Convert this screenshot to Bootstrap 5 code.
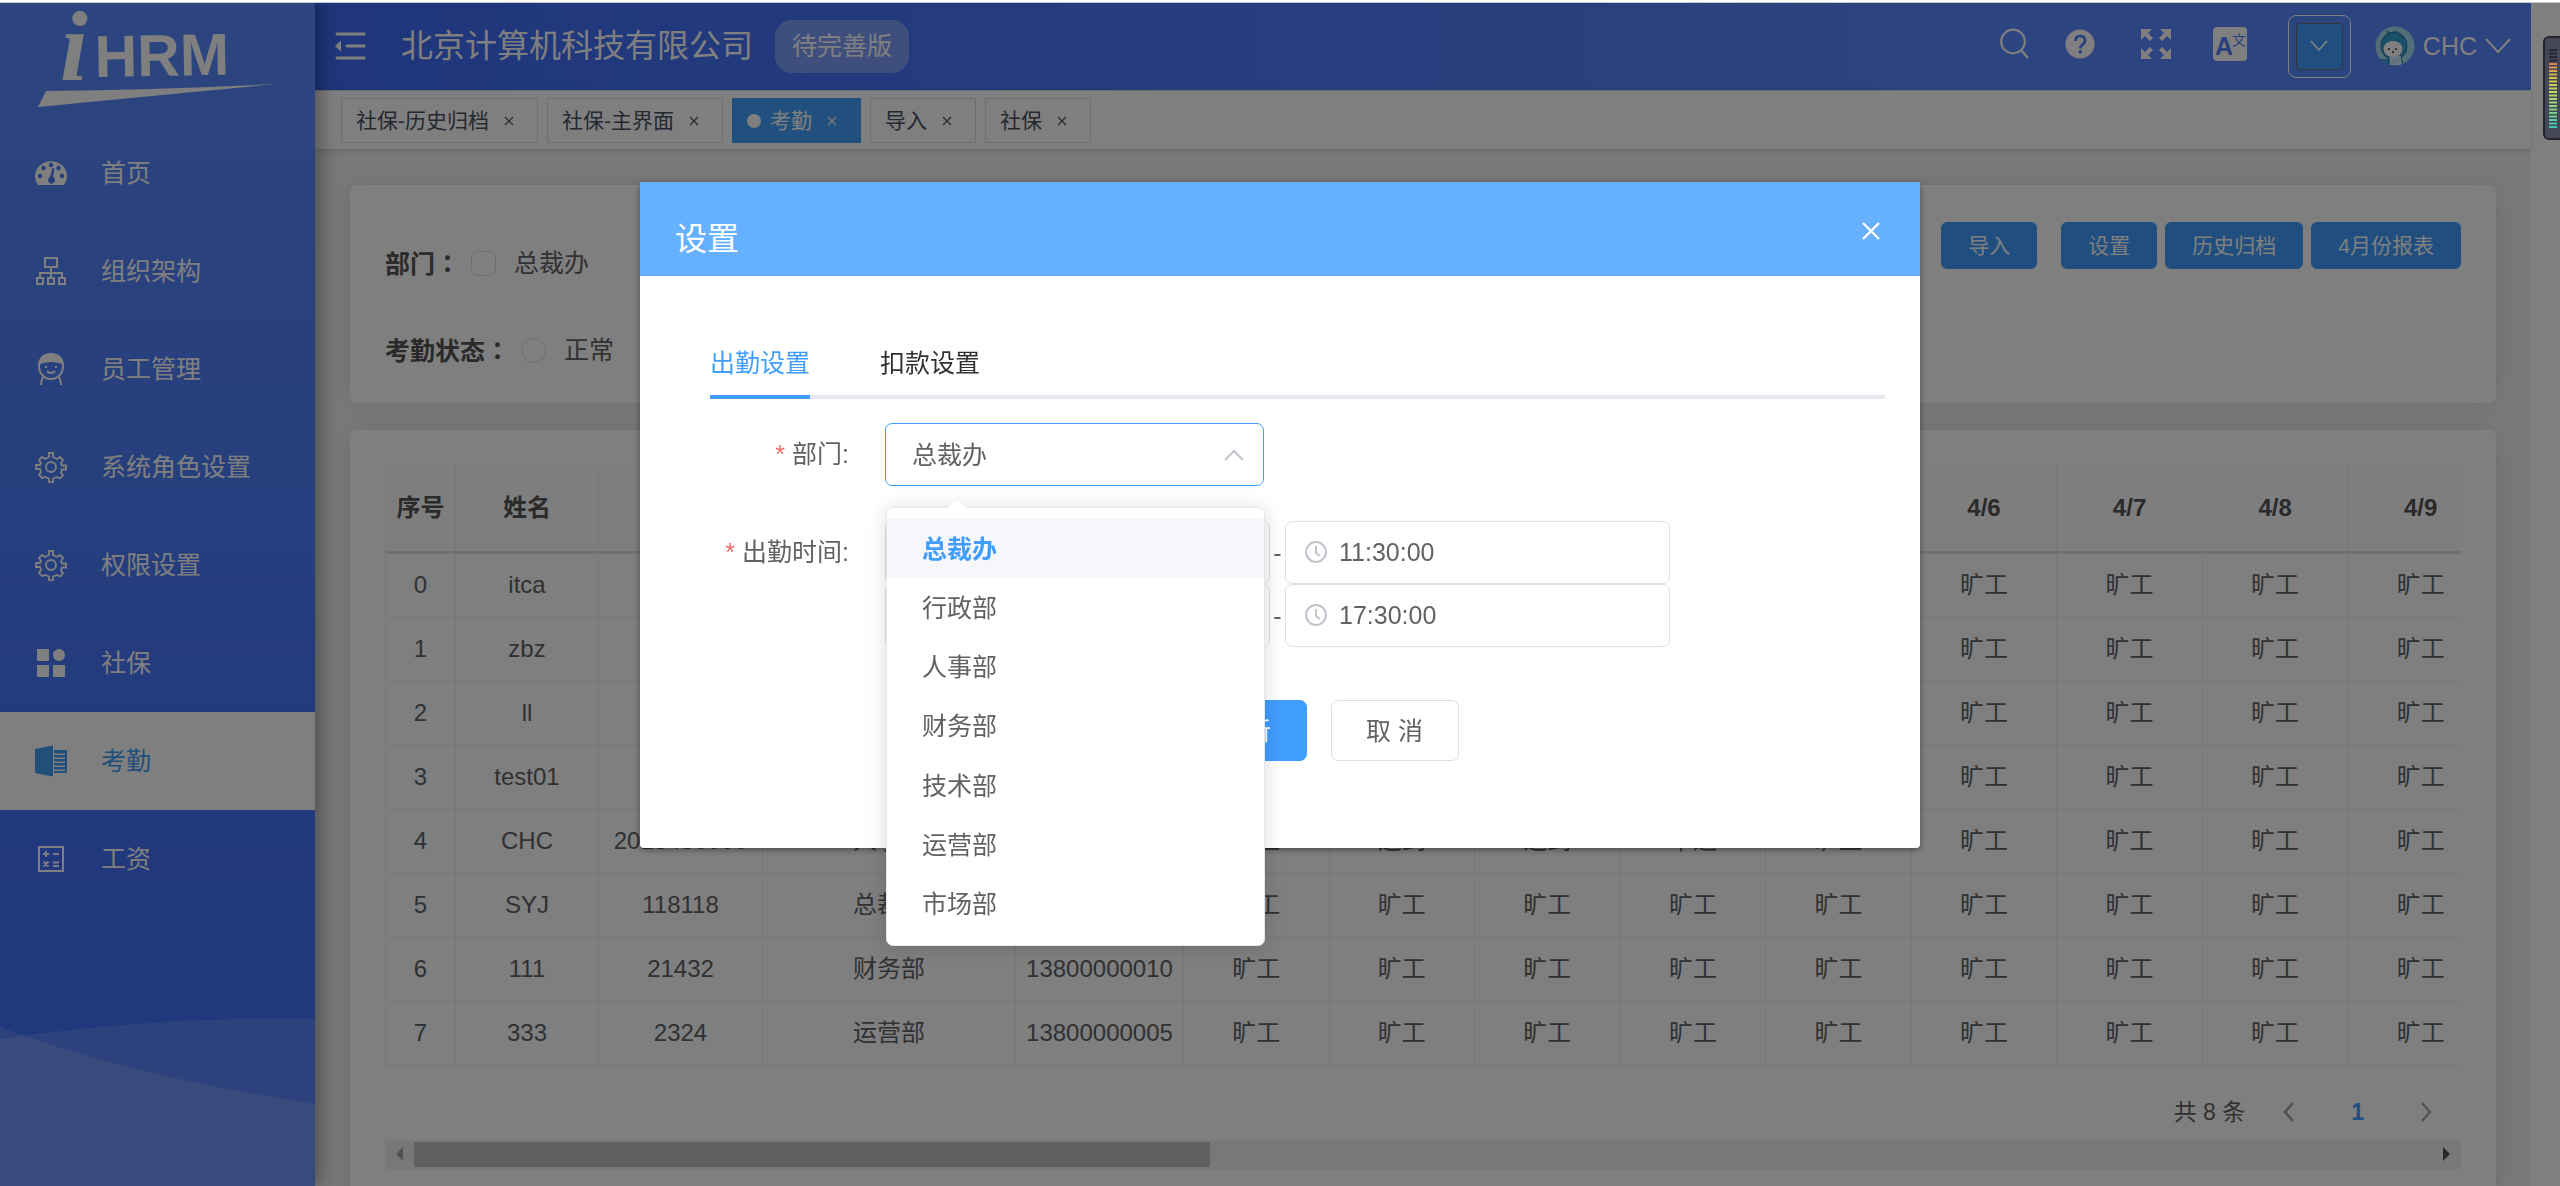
<!DOCTYPE html>
<html lang="zh-CN">
<head>
<meta charset="utf-8">
<meta name="viewport" content="width=device-width, initial-scale=1">
<title>iHRM 考勤</title>
<link href="https://cdn.jsdelivr.net/npm/bootstrap@5.3.0/dist/css/bootstrap.min.css" rel="stylesheet">
<style>
:root{--brand:#409eff;--ink:#606266;--line:#dcdfe6}
body{font-family:"Liberation Sans","Noto Sans CJK SC",sans-serif;font-size:25px;line-height:36px;color:var(--ink);height:100vh;overflow:hidden;background:#fff}
svg{display:block;flex:none}
.top-strip{height:3px;background:#fff;border-bottom:1px solid #c8c8c8;position:relative;z-index:1070}
.side-nav{width:315px;flex:none;background:linear-gradient(#5a8cfe,#4070f8 80%);box-shadow:4px 0 20px rgba(0,0,0,.4);position:relative;z-index:3}
.side-logo{height:121px}
.side-link{height:98px;padding:0 35px;gap:34px;color:#fff;text-decoration:none}
.side-link.active{background:#fff;color:#409ef5}
.side-wave{position:absolute;left:0;bottom:0;width:100%;height:172px}
.work-area{background:#eff3f7;min-width:0}
.scroll-gutter{width:29px;flex:none;background:#fff}
.top-bar{height:87px;flex:none;padding:0 20px;background:linear-gradient(90deg,#3e6cf8,#5888fe 75%);color:#fff}
.bare-btn{border:0;background:none;padding:0;color:inherit}
.head-tools{gap:36px}
.company{font-size:32px;line-height:48px;margin-left:35px}
.edition{height:53px;line-height:53px;padding:0 17px;border-radius:17px;background:rgba(255,255,255,.3);margin-left:22px}
.lang-box{width:63px;height:63px;border:1px solid #fff;border-radius:8px;margin:0 24px 0 41px}
.lang-btn{width:47px;height:47px;background:#409eff;border:1px solid #666a70;border-radius:4px;color:#fff}
.tag-bar{height:59px;flex:none;gap:9px;padding:7px 26px 0;background:#fff;border-top:1px solid #d8dce5;box-shadow:0 2px 6px rgba(0,0,0,.15);position:relative;z-index:1}
.tag-item{height:45px;border:1px solid #d8dce5;padding:2px 14px 0;font-size:21px;color:#495060;text-decoration:none;gap:6px}
.tag-item.active{background:#42a0ff;border-color:#42a0ff;color:#fff}
.tag-dot{width:14px;height:14px;border-radius:50%;background:#fff;margin-right:3px}
.tag-x{width:28px}
.content-pad{padding:36px 35px 0;gap:27px}
.panel{background:#fff;border-radius:7px;box-shadow:0 0 26px rgba(0,0,0,.1);padding:35px}
.filter-panel{height:218px;flex:none}
.filter-row{height:87px}
.filter-row b{font-weight:700;color:#555}
.filter-row b span{font-family:"Noto Sans CJK TC",sans-serif}
.filter-row .form-check-input{width:25px;height:25px;margin:0 18px 0 11px;border-color:#dcdfe6;flex:none}
.tool-set{padding-top:2px}
.btn-tool{height:47px;line-height:31px;padding:7px 26px;font-size:21px;color:#fff;background:var(--brand);border:1px solid var(--brand);border-radius:6px}
.att-wrap{overflow:hidden}
.att{table-layout:fixed;width:2109px;margin:0;font-size:24px;border-collapse:separate;border-spacing:0;border-left:1px solid #ebeef5;border-top:1px solid #ebeef5;text-align:center;color:var(--ink)}
.att td,.att th{border-right:1px solid #ebeef5;border-bottom:1px solid #ebeef5;padding:0;height:64px;white-space:nowrap}
.att th{height:88px;border-bottom:3px solid #e0e0e2;background:#fdfdfd;color:#555}
.pager{height:74px;padding:28px 29px 0 0;font-size:23px;gap:56px}
.pager .total{margin-right:-18px}
.pager a{color:#909299;text-decoration:none}
.hscroll{height:29px;background:#f1f1f1;color:#505050;padding:0 11px}
.hscroll i{height:25px;width:796px;background:#c1c1c1;margin-left:11px}
.modal-dialog{max-width:none;width:50%;margin:182px auto 0}
.modal-content{border:0;border-radius:4px;box-shadow:0 2px 6px rgba(0,0,0,.4);color:var(--ink)}
.modal-header{height:94px;padding:20px 40px 0 35px;background:#66b1ff;border:0;border-radius:0;color:#fff}
.modal-title{font-size:32px;line-height:48px;font-weight:400}
.modal-body{padding:68px 35px 87px 70px}
.set-tabs{height:55px;border-bottom:4px solid #e4e7ed;gap:70px;margin-bottom:24px}
.set-tabs a{height:55px;line-height:38px;color:#303133;text-decoration:none}
.set-tabs a.active{color:var(--brand);border-bottom:4px solid var(--brand)}
.form-line{gap:36px}
.form-line>label,.form-line>.lbl{width:139px;text-align:right;line-height:63px}
.lbl::before,.need::before{content:"* ";color:#f56c6c}
.ctl{height:63px;border:1px solid var(--line);border-radius:7px;font-size:25px;color:var(--ink);background:#fff}
.dept{width:379px;border-color:var(--brand);appearance:none;padding:0 26px}
.time-box{width:385px}
.time-box .ctl{width:100%;padding:0 53px}
.time-box svg{position:absolute;left:20px;top:20px}
.chev{position:absolute;right:20px;top:26px}
.dash{width:15px;text-align:center}
.btn-act{width:128px;height:61px;font-size:25px;border-radius:7px;border:1px solid var(--line);background:#fff;color:var(--ink)}
.btn-act.main{background:var(--brand);border-color:var(--brand);color:#fff}
.pop{position:absolute;left:1px;top:84px;width:379px;height:439px;background:#fff;border:1px solid #e4e7ed;border-radius:7px;box-shadow:0 2px 20px rgba(0,0,0,.15);padding:11px 0;margin:0;list-style:none;z-index:5}
.pop li{padding-left:35px}
.pop li.active{background:#f5f7fa;color:var(--brand);font-weight:700}
.pop-tip{position:absolute;left:62px;top:74px;z-index:6}
.meter{position:fixed;right:0;top:36px;z-index:1080}
</style>
<script src="https://cdn.jsdelivr.net/npm/bootstrap@5.3.0/dist/js/bootstrap.bundle.min.js"></script>
</head>
<body class="d-flex flex-column">
<div class="top-strip"></div>
<div class="d-flex flex-fill" style="min-height:0">
  <nav class="side-nav">
    <div class="side-logo">
      <svg width="315" height="121" viewBox="0 3 315 121" fill="#fff" role="img" aria-label="iHRM">
        <text x="60" y="80" font-family="Liberation Serif" font-weight="700" font-style="italic" font-size="100">i</text>
        <text x="95" y="77" font-family="Liberation Sans" font-weight="700" font-size="59" transform="rotate(-1 95 77)">HRM</text>
        <path d="M38 107 46 91Q160 90 276 84Q160 95 38 107z"/>
      </svg>
    </div>
    <a href="#" class="side-link d-flex align-items-center"><svg width="32" height="32" viewBox="0 0 32 32"><path fill="#fff" d="M3 28A16 15 0 1 1 29 28z"/><g fill="#4a7bfb"><circle cx="16" cy="8" r="2.2"/><circle cx="8.5" cy="11" r="2.2"/><circle cx="23.5" cy="11" r="2.2"/><circle cx="5" cy="19" r="2.2"/><circle cx="27" cy="19" r="2.2"/><path d="M17.500 11 19.500 11.500 18 20A3.500 3.500 0 1 1 15 20z"/></g></svg>首页</a>
    <a href="#" class="side-link d-flex align-items-center"><svg width="32" height="32" viewBox="0 0 32 32" fill="none" stroke="#fff" stroke-width="2"><path d="M10 3h12v9H10zM2 23h6v6H2zM13 23h6v6h-6zM24 23h6v6h-6zM16 12v11M5 23v-5h22v5"/></svg>组织架构</a>
    <a href="#" class="side-link d-flex align-items-center"><svg width="32" height="32" viewBox="0 0 32 32" fill="none" stroke="#fff" stroke-width="2"><path d="M16 1C8 1 4 6 4 13s5 13 12 13 12-6 12-13S24 1 16 1zM8 24q-2 3-2 8M24 24q2 3 2 8M12 18q4 4 8 0"/><path fill="#fff" d="M5 10Q7 2 16 2T27 10Q20 8 16 8T5 10z"/><path d="M11 13v2M21 13v2"/></svg>员工管理</a>
    <a href="#" class="side-link d-flex align-items-center"><svg width="32" height="32" viewBox="0 0 32 32" fill="none" stroke="#fff" stroke-width="1.800"><use href="#gear"/></svg>系统角色设置</a>
    <a href="#" class="side-link d-flex align-items-center"><svg width="32" height="32" viewBox="0 0 32 32" fill="none" stroke="#fff" stroke-width="1.800"><g id="gear"><path d="M14 2h4v4l4 2 3-2 3 3-2 3.500 1 2h4v4h-4l-1 3 2 3-3 3-3-1.500-4 1.500v4h-4v-4l-4-1.500L7 27l-3-3 2-3-1-3H1v-4h4l1-2L4 9l3-3 3 2 4-2z"/><circle cx="16" cy="16" r="5"/></g></svg>权限设置</a>
    <a href="#" class="side-link d-flex align-items-center"><svg width="32" height="32" viewBox="0 0 32 32" fill="#fff"><path d="M2 2h12v12H2zM2 18h12v12H2zM18 18h12v12H18z"/><circle cx="24" cy="8" r="6"/></svg>社保</a>
    <a href="#" class="side-link active d-flex align-items-center"><svg width="32" height="32" viewBox="0 0 32 32" fill="#409ef5"><path d="M0 4 18 .5v31L0 28zM19 5h13v23H19v-2h11v-1.500H19V22h11v-1.500H19V18h11v-1.500H19V14h11v-1.500H19V10h11V8.500H19z"/></svg>考勤</a>
    <a href="#" class="side-link d-flex align-items-center"><svg width="32" height="32" viewBox="0 0 32 32" fill="none" stroke="#fff" stroke-width="2"><path d="M4 4h24v24H4z"/><path d="M8 11h6M11 8v6M18 11h6M8.500 18.500l5 5M13.500 18.500l-5 5M18 19.500h6M18 23h6"/></svg>工资</a>
    <svg class="side-wave" viewBox="0 0 315 172" preserveAspectRatio="none" fill="#fff" fill-opacity=".14"><path d="M0 13Q130 62 315 90V172H0z"/><path d="M0 25Q160 2 315 5V172H0z"/></svg>
  </nav>
  <div class="work-area flex-fill d-flex flex-column">
    <header class="top-bar d-flex align-items-center">
      <button class="bare-btn" aria-label="收起菜单"><svg width="31" height="28" viewBox="0 0 31 28" stroke="#fff" stroke-width="3" stroke-linecap="round"><path d="M2 2h27M12 14h17M2 26h27"/><path d="M0 14 6 8.500v11z" fill="#fff" stroke="none"/></svg></button>
      <span class="company">北京计算机科技有限公司</span>
      <span class="edition">待完善版</span>
      <div class="ms-auto d-flex align-items-center">
        <div class="head-tools d-flex align-items-center pb-1">
          <button class="bare-btn" aria-label="搜索"><svg width="30" height="32" viewBox="0 0 30 32" fill="none" stroke="#fff" stroke-width="2.200"><circle cx="14" cy="13.500" r="11.800"/><path d="m22 22 7 8"/></svg></button>
          <button class="bare-btn" aria-label="帮助"><svg width="30" height="32" viewBox="2 0 30 32"><circle cx="17" cy="16" r="14.500" fill="#fff"/><path d="M12.500 13q0-5 4.700-5t4.800 4.500q0 2.500-2.700 4.300-2 1.300-2 3.700" fill="none" stroke="#4a7afa" stroke-width="2.600"/><circle cx="17.200" cy="24" r="1.700" fill="#4a7afa"/></svg></button>
          <button class="bare-btn ms-2" aria-label="全屏"><svg width="34" height="34" viewBox="0 0 34 34" fill="#fff"><g id="arr"><path d="M2 2h11l-4 4 5 5-3 3-5-5-4 4z"/></g><use href="#arr" transform="matrix(-1 0 0 1 34 0)"/><use href="#arr" transform="matrix(1 0 0 -1 0 34)"/><use href="#arr" transform="matrix(-1 0 0 -1 34 34)"/></svg></button>
          <button class="bare-btn ms-1" aria-label="语言"><svg width="34" height="34" viewBox="0 0 34 34"><rect width="34" height="34" rx="4" fill="#fff"/><text x="2" y="28" font-family="Liberation Sans" font-weight="700" font-size="25" fill="#5080fb">A</text><text x="19" y="18" font-family="Noto Sans CJK SC" font-size="14" fill="#5080fb">文</text></svg></button>
        </div>
        <div class="lang-box d-flex align-items-center justify-content-center"><button class="lang-btn d-flex align-items-center justify-content-center p-0" aria-label="更多"><svg width="18" height="12" viewBox="0 0 18 12" fill="none" stroke="#fff" stroke-width="1.800"><path d="m1 1 8 9 8-9"/></svg></button></div>
        <button class="bare-btn d-flex align-items-center">
          <svg width="40" height="40" viewBox="0 0 40 40"><defs><clipPath id="av"><circle cx="20" cy="20" r="19.500"/></clipPath></defs><g clip-path="url(#av)"><path fill="#a6dbf2" d="M0 0h40v40H0z"/><path d="M15 10 12 5M22 9l-1-4" stroke="#236fa5" stroke-width="1.500"/><ellipse cx="19" cy="20" rx="13" ry="14" fill="#359fd0" stroke="#236fa5"/><path d="M0 33h14l3 7H0z" fill="#35a0d5"/><path d="M14 29h12l2 11H14z" fill="#c8eafa" stroke="#236fa5"/><ellipse cx="18" cy="23" rx="9.500" ry="8" fill="#fff"/><path d="M14 22v2M21 22v2M17 26h2" stroke="#333" stroke-width="1.500"/></g></svg>
          <span class="ms-2">CHC</span>
          <svg class="ms-2" width="26" height="16" viewBox="0 0 26 16" fill="none" stroke="#fff" stroke-width="2"><path d="m1 1 12 13L25 1"/></svg>
        </button>
      </div>
    </header>
    <div class="tag-bar d-flex" id="tags"></div>
    <main class="content-pad d-flex flex-column flex-fill">
      <section class="panel filter-panel d-flex justify-content-between align-items-start">
        <div>
          <div class="filter-row d-flex align-items-center"><b>部门<span lang="zh-TW">：</span></b><input class="form-check-input" type="checkbox" id="fd"><label for="fd">总裁办</label></div>
          <div class="filter-row d-flex align-items-center"><b>考勤状态<span lang="zh-TW">：</span></b><input class="form-check-input" type="radio" id="fs"><label for="fs">正常</label></div>
        </div>
        <div class="tool-set d-flex gap-2">
          <button class="btn-tool me-3">导入</button><button class="btn-tool">设置</button><button class="btn-tool">历史归档</button><button class="btn-tool">4月份报表</button>
        </div>
      </section>
      <section class="panel flex-fill">
        <div class="att-wrap"><table class="att" id="att"></table></div>
        <div class="pager d-flex justify-content-end"><span class="total">共 8 条</span><a href="#" aria-label="上一页"><svg width="12" height="36" viewBox="0 0 12 36" fill="none" stroke="#a0a3aa" stroke-width="2.400"><path d="m10 9-8 9 8 9"/></svg></a><a href="#" class="fw-bold" style="color:#409eff">1</a><a href="#" aria-label="下一页"><svg width="12" height="36" viewBox="0 0 12 36" fill="none" stroke="#a0a3aa" stroke-width="2.400"><path d="m2 9 8 9-8 9"/></svg></a></div>
        <div class="hscroll d-flex align-items-center"><svg width="7" height="14" viewBox="0 0 7 14"><path d="M7 0v14L0 7z" fill="#a3a3a3"/></svg><i></i><svg class="ms-auto" width="7" height="14" viewBox="0 0 7 14"><path d="M0 0v14l7-7z" fill="#505050"/></svg></div>
      </section>
    </main>
  </div>
  <div class="scroll-gutter"></div>
</div>

<div class="modal-backdrop show"></div>
<div class="modal d-block" tabindex="-1" role="dialog" aria-labelledby="dlgTitle">
  <div class="modal-dialog">
    <div class="modal-content">
      <div class="modal-header d-flex justify-content-between align-items-center">
        <h2 class="modal-title" id="dlgTitle">设置</h2>
        <button class="bare-btn mb-3" aria-label="关闭"><svg width="18" height="18" viewBox="0 0 18 18" stroke="#fff" stroke-width="2.400"><path d="m1 1 16 16M17 1 1 17"/></svg></button>
      </div>
      <div class="modal-body">
        <nav class="set-tabs d-flex"><a href="#" class="active">出勤设置</a><a href="#">扣款设置</a></nav>
        <div class="form-line d-flex">
          <label class="need" for="dept">部门:</label>
          <div class="position-relative">
            <select class="ctl dept" id="dept"><option>总裁办</option><option>行政部</option><option>人事部</option><option>财务部</option><option>技术部</option><option>运营部</option><option>市场部</option></select>
            <svg class="chev" width="20" height="12" viewBox="0 0 20 12" fill="none" stroke="#c0c4cc" stroke-width="2"><path d="m1 11 9-9 9 9"/></svg>
            <ul class="pop d-flex flex-column">
              <li class="active flex-fill d-flex align-items-center">总裁办</li><li class="flex-fill d-flex align-items-center">行政部</li><li class="flex-fill d-flex align-items-center">人事部</li><li class="flex-fill d-flex align-items-center">财务部</li><li class="flex-fill d-flex align-items-center">技术部</li><li class="flex-fill d-flex align-items-center">运营部</li><li class="flex-fill d-flex align-items-center">市场部</li>
            </ul>
            <svg class="pop-tip" width="20" height="11" viewBox="0 0 20 11"><path d="M0 11 10 1l10 10" fill="#fff" stroke="#ebeef5"/></svg>
          </div>
        </div>
        <div class="form-line d-flex" style="margin-top:35px">
          <div class="lbl">出勤时间:</div>
          <div>
            <div class="d-flex align-items-center"><div class="time-box position-relative"><input class="ctl" aria-label="上午开始" value="08:30:00"><svg width="22" height="22" viewBox="0 0 22 22"><use href="#clk"/></svg></div><span class="dash">-</span><div class="time-box position-relative"><input class="ctl" aria-label="上午结束" value="11:30:00"><svg width="22" height="22" viewBox="0 0 22 22"><g id="clk" fill="none" stroke="#c0c4cc" stroke-width="2"><circle cx="11" cy="11" r="10"/><path d="M11 5v7l4 3"/></g></svg></div></div>
            <div class="d-flex align-items-center"><div class="time-box position-relative"><input class="ctl" aria-label="下午开始" value="13:30:00"><svg width="22" height="22" viewBox="0 0 22 22"><use href="#clk"/></svg></div><span class="dash">-</span><div class="time-box position-relative"><input class="ctl" aria-label="下午结束" value="17:30:00"><svg width="22" height="22" viewBox="0 0 22 22"><use href="#clk"/></svg></div></div>
          </div>
        </div>
        <div class="d-flex justify-content-center gap-4" style="margin-top:53px;padding-left:42px"><button class="btn-act main">更 新</button><button class="btn-act">取 消</button></div>
      </div>
    </div>
  </div>
</div>

<svg class="meter" width="17" height="104" viewBox="0 0 17 104"><defs><linearGradient id="mg" x1="0" y1="0" x2="0" y2="1"><stop offset="0" stop-color="#e0804f"/><stop offset=".2" stop-color="#d9b84a"/><stop offset=".45" stop-color="#c3d860"/><stop offset=".75" stop-color="#7fcf8a"/><stop offset="1" stop-color="#40c8b8"/></linearGradient></defs><rect x="1" y="1" width="24" height="102" rx="5" fill="#434757" stroke="#22252f" stroke-width="2"/><path d="M10 13v14" stroke="#262935" stroke-width="8" stroke-dasharray="2 1.500"/><rect x="6" y="27" width="8" height="65" fill="url(#mg)"/><path d="M10 29v63" stroke="#434757" stroke-width="8" stroke-dasharray="1.500 2"/></svg>

<script>
const x = '<svg class="tag-x" height="10" viewBox="0 0 28 10" fill="none" stroke="currentColor" stroke-width="1.200"><path d="m10 1 8 8M18 1l-8 8"/></svg>';
document.getElementById('tags').innerHTML = ['社保-历史归档','社保-主界面','考勤','导入','社保'].map(t =>
  `<a href="#" class="tag-item d-flex align-items-center${t === '考勤' ? ' active' : ''}">${t === '考勤' ? '<span class="tag-dot"></span>' : ''}${t}${x}</a>`).join('');
const days = Array.from({length: 9}, (_, i) => '4/' + (i + 1));
const rows = [['itca','','总裁办',''],['zbz','','总裁办',''],['ll','','总裁办',''],['test01','','总裁办',''],
  ['CHC','2018480000','人事部','',['旷工','迟到','迟到','早退']],['SYJ','118118','总裁办',''],['111','21432','财务部','13800000010'],['333','2324','运营部','13800000005']];
document.getElementById('att').innerHTML =
  '<colgroup><col style="width:70px"><col style="width:143px"><col style="width:164px"><col style="width:253px"><col style="width:168px"></colgroup><thead><tr>' +
  ['序号','姓名','工号','部门','手机', ...days].map(h => `<th scope="col">${h}</th>`).join('') + '</tr></thead><tbody>' +
  rows.map((r, i) => '<tr>' + [i, ...r.slice(0, 4), ...days.map((_, d) => (r[4] || [])[d] || '旷工')].map(c => `<td>${c}</td>`).join('') + '</tr>').join('') + '</tbody>';
</script>
</body>
</html>
